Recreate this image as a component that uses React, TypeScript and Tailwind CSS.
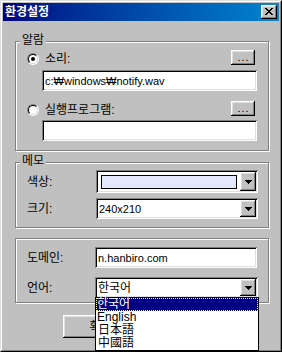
import React from 'react';

// win98-ish bevels
const raised = 'shadow-[inset_-1px_-1px_0_#000,inset_1px_1px_0_#fff,inset_-2px_-2px_0_#808080,inset_2px_2px_0_#dfdfdf]';
const sunken = 'shadow-[inset_1px_1px_0_#808080,inset_-1px_-1px_0_#fff,inset_2px_2px_0_#000,inset_-2px_-2px_0_#dfdfdf]';
const etched = 'border border-[#808080] shadow-[inset_1px_1px_0_#fff,1px_1px_0_#fff]';

const Radio: React.FC<{ checked?: boolean }> = ({ checked }) => (
    <div className="w-[12px] h-[12px] rounded-full border border-t-[#808080] border-l-[#808080] border-r-white border-b-white">
        <div className="w-full h-full rounded-full border border-t-black border-l-black border-r-[#dfdfdf] border-b-[#dfdfdf] bg-white flex items-center justify-center">
            {checked && <div className="w-[4px] h-[4px] rounded-full bg-black" />}
        </div>
    </div>
);

const ArrowBtn: React.FC = () => (
    <div className={`w-[16px] h-full bg-[#c0c0c0] ${raised} flex items-center justify-center`}>
        <svg width="7" height="4" viewBox="0 0 7 4" shapeRendering="crispEdges">
            <path d="M0 0h7v1h-1v1h-1v1h-1v1h-1v-1h-1v-1h-1v-1h-1z" fill="#000" />
        </svg>
    </div>
);

const DotsBtn: React.FC = () => (
    <div className={`ml-auto w-[24px] h-[15px] bg-[#c0c0c0] ${raised} flex items-center justify-center`}>
        <span className="text-[11px] leading-[11px] tracking-[1px] pl-[1px]">...</span>
    </div>
);

const GroupLabel: React.FC<{ text: string }> = ({ text }) => (
    <div className="absolute top-[-9px] left-[4px] px-[2px] bg-[#c0c0c0] leading-[14px]">{text}</div>
);

export default function App() {
    return (
        <div className="w-[282px] h-[352px] bg-[#c0c0c0] border border-t-[#dfdfdf] border-l-[#dfdfdf] border-r-black border-b-black text-[12px] leading-[14px] text-black font-['Liberation_Sans','Noto_Sans_CJK_KR',sans-serif] overflow-hidden">
            <div className="h-full border border-t-white border-l-white border-r-[#808080] border-b-[#808080] p-px flex flex-col">
                {/* title bar */}
                <div className="h-[18px] shrink-0 bg-linear-to-r from-[#000080] to-[#1084d0] flex items-center pl-[2px] pr-[2px]">
                    <span className="text-white font-bold text-[12px] leading-[14px]">환경설정</span>
                    <div className={`ml-auto w-[16px] h-[14px] bg-[#c0c0c0] ${raised} flex items-start justify-start pl-[4px] pt-[3px]`}>
                        <svg width="8" height="7" viewBox="0 0 8 7" shapeRendering="crispEdges">
                            <path d="M0 0h2v1h1v1h2v-1h1v-1h2v1h-1v1h-1v1h-1v1h1v1h1v1h1v1h-2v-1h-1v-1h-2v1h-1v1h-2v-1h1v-1h1v-1h1v-1h-1v-1h-1v-1h-1z" fill="#000" />
                        </svg>
                    </div>
                </div>

                {/* 알람 */}
                <div className={`relative mt-[20px] ml-[12px] w-[254px] h-[110px] shrink-0 ${etched} flex flex-col`}>
                    <GroupLabel text="알람" />
                    <div className="flex items-center h-[15px] mt-[8px] pl-[11px] pr-[13px]">
                        <div className="flex items-center gap-[6px] translate-y-[1px]">
                            <Radio checked />
                            <span>소리:</span>
                        </div>
                        <DotsBtn />
                    </div>
                    <div className={`mt-[5px] ml-[26px] w-[215px] h-[21px] bg-white ${sunken} flex items-center pl-[3px] text-[11px]`}>
                        c:₩windows₩notify.wav
                    </div>
                    <div className="flex items-center h-[15px] mt-[10px] pl-[11px] pr-[13px]">
                        <div className="flex items-center gap-[6px] translate-y-[1px]">
                            <Radio />
                            <span>실행프로그램:</span>
                        </div>
                        <DotsBtn />
                    </div>
                    <div className={`mt-[4px] ml-[26px] w-[215px] h-[21px] bg-white ${sunken}`} />
                </div>

                {/* 메모 */}
                <div className={`relative mt-[11px] ml-[12px] w-[254px] h-[66px] shrink-0 ${etched} flex flex-col`}>
                    <GroupLabel text="메모" />
                    <div className="flex items-center mt-[7px] pl-[11px]">
                        <span className="w-[69px]">색상:</span>
                        <div className={`w-[162px] h-[23px] bg-white ${sunken} p-[2px] flex`}>
                            <div className="flex-1 flex items-center px-[3px]">
                                <div className="w-full h-[14px] bg-[#e4e8fc] border border-black" />
                            </div>
                            <ArrowBtn />
                        </div>
                    </div>
                    <div className="flex items-center mt-[5px] pl-[11px]">
                        <span className="w-[69px]">크기:</span>
                        <div className={`w-[162px] h-[21px] bg-white ${sunken} p-[2px] flex`}>
                            <div className="flex-1 flex items-center pl-[1px] text-[11px]">240x210</div>
                            <ArrowBtn />
                        </div>
                    </div>
                </div>

                {/* 도메인 / 언어 */}
                <div className={`relative mt-[10px] ml-[12px] w-[254px] h-[65px] shrink-0 ${etched} flex flex-col`}>
                    <div className="flex items-center mt-[8px] pl-[11px]">
                        <span className="w-[68px]">도메인:</span>
                        <div className={`w-[162px] h-[21px] bg-white ${sunken} flex items-center pl-[3px] text-[11px]`}>
                            n.hanbiro.com
                        </div>
                    </div>
                    <div className="flex items-center mt-[9px] pl-[11px]">
                        <span className="w-[68px]">언어:</span>
                        <div className={`relative w-[163px] h-[21px] bg-white ${sunken} p-[2px] flex`}>
                            <div className="flex-1 flex items-center pl-[1px]">한국어</div>
                            <ArrowBtn />
                            {/* open dropdown list */}
                            <div className="absolute top-[20px] left-0 w-[164px] h-[54px] bg-white border border-black z-10 flex flex-col">
                                <div className="h-[13px] leading-[13px] px-[1px] bg-[#000080] text-white outline outline-1 outline-dotted outline-[#ffff80] -outline-offset-1">한국어</div>
                                <div className="h-[13px] leading-[13px] px-[1px] text-[12px]">English</div>
                                <div className="h-[13px] leading-[13px] px-[2px]">日本語</div>
                                <div className="h-[13px] leading-[13px] px-[2px]">中國語</div>
                            </div>
                        </div>
                    </div>
                </div>

                {/* button, mostly hidden by the list */}
                <div className="flex mt-[12px] ml-[60px]">
                    <div className={`w-[75px] h-[23px] bg-[#c0c0c0] ${raised} flex items-center justify-center`}>확인</div>
                </div>
            </div>
        </div>
    );
}
